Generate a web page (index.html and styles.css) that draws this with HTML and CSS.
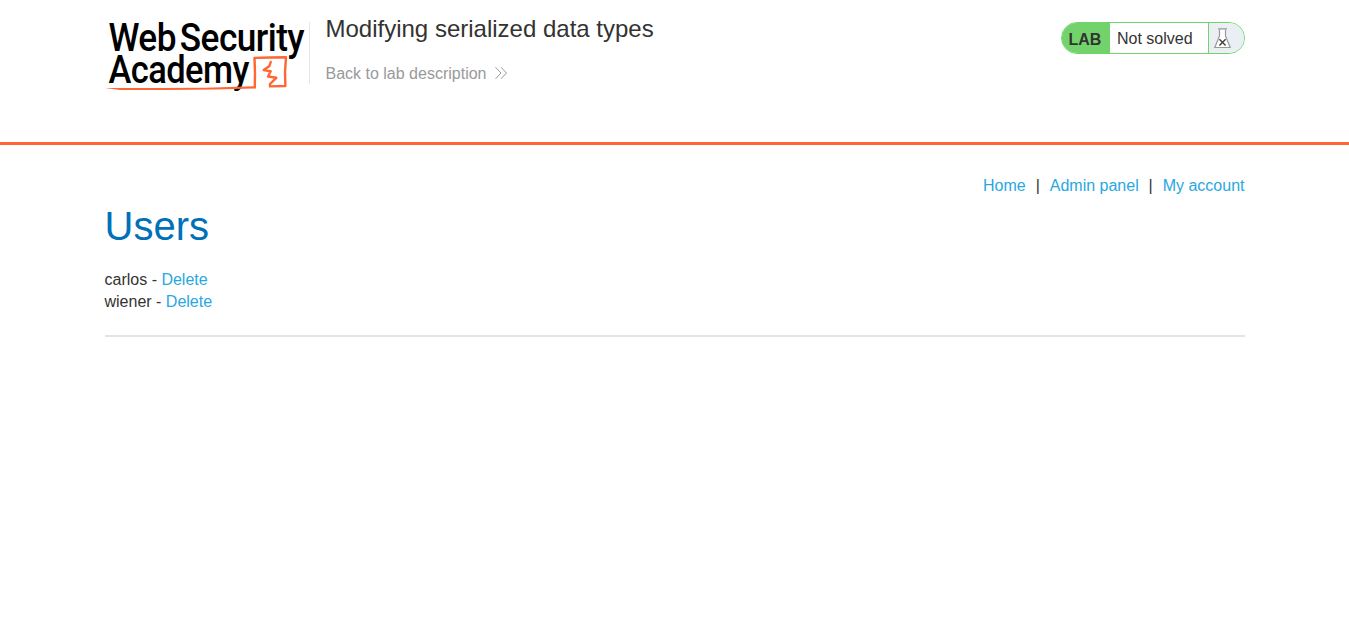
FILE: index.html
```html
<!DOCTYPE html>
<html lang="en">
<head>
<meta charset="utf-8">
<title>Modifying serialized data types</title>
<link rel="stylesheet" href="styles.css">
</head>
<body>
<header class="lab-header">
  <div class="container header-row">
    <svg class="logo" viewBox="105 10 204 90" role="img" aria-label="Web Security Academy">
      <g class="logo-text">
        <text x="108.4" y="51" textLength="67.5" lengthAdjust="spacingAndGlyphs">Web</text>
        <text x="179.8" y="51" textLength="124.3" lengthAdjust="spacingAndGlyphs">Security</text>
        <text x="108.4" y="83.4" textLength="140.5" lengthAdjust="spacingAndGlyphs">Academy</text>
      </g>
      <g class="logo-mark">
        <path d="M254.8 87.5 L255 73 L254.5 57.9 L270 57.5 L286 57.2 L285 72 L285.4 86 L270 86.4 L270 84 L276.3 77.8 L268 76.5 L270.7 71.2 L263.7 70 L269.5 66 L270.7 62"/>
        <path class="logo-line" d="M105 88.1 L125 88 L160 88 L205 87.8 L254 86.2 L254 88.6 L215 89.6 L165 90 L120 90.1 Z"/>
      </g>
    </svg>
    <div class="title-block">
      <h2>Modifying serialized data types</h2>
      <a class="back-link" href="#">Back to lab description
        <svg viewBox="0 0 12 12"><path d="M.5 .2 L6 6 L.5 11.8 M6 .2 L11.5 6 L6 11.8"/></svg>
      </a>
    </div>
    <div class="status">
      <span class="status-label">LAB</span>
      <span class="status-text">Not solved</span>
      <span class="status-icon">
        <svg viewBox="0 0 17 21">
          <path class="flask" d="M5.5 1.5 V8 L.8 19.5 H16.2 L11.5 8 V1.5"/>
          <path class="flask" d="M4 .8 H13"/>
          <path class="cross" d="M5.4 11.3 L11.6 17.5 M11.6 11.3 L5.4 17.5"/>
        </svg>
      </span>
    </div>
  </div>
</header>
<main class="container">
  <nav class="top-links"><a href="#">Home</a><span>|</span><a href="#">Admin panel</a><span>|</span><a href="#">My account</a></nav>
  <h1>Users</h1>
  <div class="user">carlos - <a href="#">Delete</a></div>
  <div class="user">wiener - <a href="#">Delete</a></div>
  <hr>
</main>
</body>
</html>
```
FILE: styles.css
```css
* { box-sizing: border-box; }
body {
  margin: 0;
  background: #fff;
  color: #333332;
  font: 16px/22px "Liberation Sans", Arial, sans-serif;
}
a { color: #29a7df; text-decoration: none; }
.container { width: 1140px; margin: 0 auto; }
.lab-header { height: 145px; border-bottom: 3px solid #ff6633; }
.header-row { display: flex; align-items: flex-start; }
.logo { width: 204px; height: 90px; margin-top: 10px; flex: none; }
.logo-text { font: 500 38px Roboto, sans-serif; letter-spacing: -.6px; fill: #000; }
.logo-mark { fill: none; stroke: #ff6633; stroke-width: 2.4; stroke-linejoin: round; stroke-linecap: round; }
.logo-mark .logo-line { fill: #ff6633; stroke: none; }
.title-block {
  height: 62px;
  margin-top: 22px;
  padding-left: 16px;
  border-left: 1px solid #e6e6e6;
}
.title-block h2 { margin: -7px 0 0; font-size: 24px; line-height: 28px; font-weight: 400; }
.back-link { display: flex; align-items: center; gap: 8.5px; margin-top: 20px; color: #999; }
.back-link svg { width: 12px; height: 12px; margin-top: -2px; fill: none; stroke: #999; stroke-width: 1; }
.status {
  display: flex;
  width: 184px;
  height: 32px;
  margin: 22px 0 0 auto;
  border: 1px solid #72d36d;
  border-radius: 16px;
  overflow: hidden;
  line-height: 31px;
}
.status-label { width: 48px; padding: 1px 0 0 7px; background: #72d36d; font-weight: 700; }
.status-text { width: 98px; padding-left: 7.5px; }
.status-icon { flex: 1; padding: 5px 0 0 5px; background: #eaeff3; border-left: 1px solid #72d36d; }
.status-icon svg { display: block; width: 17px; height: 21px; }
.flask { fill: #fff; stroke: #999; stroke-width: 1.2; }
.cross { fill: none; stroke: #444; stroke-width: 1.5; }
.top-links { display: flex; justify-content: flex-end; padding-top: 30px; }
.top-links span { width: 24px; text-align: center; }
h1 { margin: 7px 0 21px; color: #0071b9; font-size: 40px; line-height: 44px; font-weight: 400; }
hr { height: 2px; margin: 22px 0 0; border: 0; background: #e4e4e4; }
```
